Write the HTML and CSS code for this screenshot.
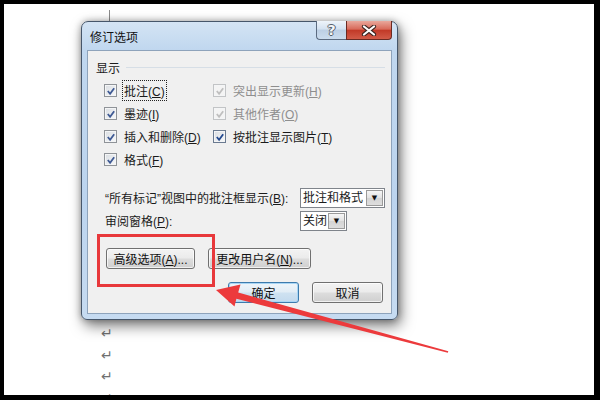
FILE: index.html
```html
<!DOCTYPE html>
<html lang="zh-CN">
<head>
  <meta charset="UTF-8">
  <title>修订选项</title>
  <link rel="stylesheet" href="styles.css">
</head>
<body>
  <div class="screen">
    <div class="doc">
      <span class="cursor"></span>
      <div class="marks">
        <span>↵</span>
        <span>↵</span>
        <span>↵</span>
        <span>↵</span>
      </div>
    </div>

    <div class="dialog">
      <div class="titlebar">
        <span class="title">修订选项</span>
        <div class="caption">
          <span class="cap-btn help">?</span>
          <span class="cap-btn close">
            <svg width="16" height="11" viewBox="0 0 16 11">
              <path d="M3 1.5 L13 9.5 M13 1.5 L3 9.5" stroke="#3a2420" stroke-width="4.2" stroke-linecap="round"/>
              <path d="M3 1.5 L13 9.5 M13 1.5 L3 9.5" stroke="#fff" stroke-width="2.2" stroke-linecap="round"/>
            </svg>
          </span>
        </div>
      </div>

      <div class="panel">
        <div class="group">显示</div>

        <div class="checks">
          <label class="check">
            <span class="box"><svg viewBox="0 0 11 11"><path d="M2 5.5 L4.5 8.5 L9 2.5"/></svg></span>
            <span class="focus">批注(<u>C</u>)</span>
          </label>
          <label class="check disabled">
            <span class="box"><svg viewBox="0 0 11 11"><path d="M2 5.5 L4.5 8.5 L9 2.5"/></svg></span>
            <span>突出显示更新(<u>H</u>)</span>
          </label>
          <label class="check">
            <span class="box"><svg viewBox="0 0 11 11"><path d="M2 5.5 L4.5 8.5 L9 2.5"/></svg></span>
            <span>墨迹(<u>I</u>)</span>
          </label>
          <label class="check disabled">
            <span class="box"><svg viewBox="0 0 11 11"><path d="M2 5.5 L4.5 8.5 L9 2.5"/></svg></span>
            <span>其他作者(<u>O</u>)</span>
          </label>
          <label class="check">
            <span class="box"><svg viewBox="0 0 11 11"><path d="M2 5.5 L4.5 8.5 L9 2.5"/></svg></span>
            <span>插入和删除(<u>D</u>)</span>
          </label>
          <label class="check">
            <span class="box strong"><svg viewBox="0 0 11 11"><path d="M2 5.5 L4.5 8.5 L9 2.5"/></svg></span>
            <span>按批注显示图片(<u>T</u>)</span>
          </label>
          <label class="check">
            <span class="box"><svg viewBox="0 0 11 11"><path d="M2 5.5 L4.5 8.5 L9 2.5"/></svg></span>
            <span>格式(<u>F</u>)</span>
          </label>
        </div>

        <div class="fields">
          <div class="field">
            <span class="field-label">“所有标记”视图中的批注框显示(<u>B</u>):</span>
            <span class="combo wide"><span class="combo-text">批注和格式</span><span class="combo-btn">▼</span></span>
          </div>
          <div class="field">
            <span class="field-label">审阅窗格(<u>P</u>):</span>
            <span class="combo narrow"><span class="combo-text">关闭</span><span class="combo-btn">▼</span></span>
          </div>
        </div>

        <div class="btn-row">
          <button class="btn advanced">高级选项(<u>A</u>)...</button>
          <button class="btn username">更改用户名(<u>N</u>)...</button>
        </div>
        <div class="btn-row end">
          <button class="btn ok">确定</button>
          <button class="btn cancel">取消</button>
        </div>
      </div>
    </div>

    <div class="callout"></div>
    <svg class="arrow" width="600" height="400" viewBox="0 0 600 400">
      <polygon points="216,290 240.5,284.5 238.2,292.6 448.3,351.2 447.8,352.8 236.4,298.8 234.5,306.5" fill="#ec3a3c"/>
    </svg>
  </div>
</body>
</html>
```

FILE: styles.css
```css
body {
  margin: 0;
  padding: 0;
  background-color: #fff;
  font-family: "Liberation Sans", "Noto Sans CJK SC", sans-serif;
  font-size: 12px;
  color: #1b1b1b;
}

.screen {
  position: relative;
  width: 600px;
  height: 400px;
  overflow: hidden;
  background-color: #fff;
}

/* black photo frame round the whole shot */
.screen::after {
  content: "";
  position: absolute;
  inset: 0;
  border-style: solid;
  border-color: #000;
  border-width: 4px 6px 5px 4px;
  pointer-events: none;
}

.doc {
  display: flex;
  flex-direction: column;
  padding-left: 101px;
}

.cursor {
  width: 1px;
  height: 11px;
  margin: 10px 0 0 8px;
  background-color: #8a8a8a;
}

.marks {
  display: flex;
  flex-direction: column;
  margin-top: 302px;
  font-family: "DejaVu Sans", sans-serif;
  font-size: 14px;
  line-height: 21.5px;
  color: #707070;
}

.dialog {
  position: absolute;
  left: 81px;
  top: 21px;
  width: 317px;
  height: 299px;
  box-sizing: border-box;
  display: flex;
  flex-direction: column;
  padding: 0 5px 5px;
  border: 1px solid #46566a;
  border-radius: 7px 7px 6px 6px;
  background: linear-gradient(#d4e4f4, #c0d7ef 28px, #bcd4ee 60%, #c6dbf1);
  box-shadow: 3px 6px 14px rgba(0, 0, 0, 0.5), 0 0 7px rgba(0, 0, 0, 0.3);
}

.titlebar {
  display: flex;
  justify-content: space-between;
  align-items: center;
  height: 28px;
}

.title {
  padding-left: 3px;
  margin-top: 1px;
  font-size: 12px;
  color: #111;
}

.caption {
  display: flex;
  align-self: flex-start;
  margin-top: -1px;
}

.cap-btn {
  display: flex;
  justify-content: center;
  align-items: center;
  height: 18px;
  box-sizing: content-box;
  border: 1px solid #5b6b80;
  border-top: none;
}

.help {
  width: 29px;
  border-right: none;
  border-radius: 0 0 0 4px;
  background: linear-gradient(#eef4fa, #d4e2f1 45%, #bccfe4 50%, #cbdcee);
  font-family: "DejaVu Sans", sans-serif;
  font-weight: bold;
  font-size: 14px;
  color: #f4f6f8;
  text-shadow: 1px 0 #55606c, -1px 0 #55606c, 0 1px #55606c, 0 -1px #55606c;
}

.close {
  width: 44px;
  border-color: #6a2a22;
  border-radius: 0 0 4px 0;
  background: linear-gradient(#e9a89c, #d86a5a 45%, #c23a28 52%, #d25b48);
}

.panel {
  flex: 1;
  border: 1px solid #8ea3bb;
  background-color: #f0f0f0;
}

.group {
  display: flex;
  align-items: center;
  gap: 6px;
  height: 16px;
  margin: 8px 6px 0 8px;
}

.group::after {
  content: "";
  flex: 1;
  margin-top: 1px;
  border-top: 1px solid #d6dee6;
}

.checks {
  display: grid;
  grid-template-columns: 109px auto;
  grid-auto-rows: 23px;
  margin-top: 4px;
  padding-left: 16px;
}

.check {
  display: flex;
  align-items: center;
  gap: 7px;
}

.check u,
.field-label u,
.btn u {
  text-underline-offset: 1px;
}

.box {
  display: flex;
  justify-content: center;
  align-items: center;
  width: 11px;
  height: 11px;
  border: 1px solid #8f9398;
  background: linear-gradient(135deg, #d9dde2, #f8f9fa);
  box-shadow: inset 0 0 0 1px #f4f5f6;
}

.box svg {
  width: 10px;
  height: 10px;
  fill: none;
  stroke: #3f5a94;
  stroke-width: 2;
}

.box.strong {
  border-color: #6a7a90;
}

.box.strong svg {
  stroke: #23498f;
}

.check.disabled {
  color: #8e8e8e;
}

.check.disabled .box {
  border-color: #c2c4c6;
  background: #f4f4f4;
}

.check.disabled .box svg {
  stroke: #bfbfbf;
}

.focus {
  margin-left: -2px;
  padding: 1px 1px;
  border: 1px dotted #222;
}

.fields {
  margin-top: 15px;
  padding-left: 17px;
}

.field {
  display: flex;
  align-items: center;
  height: 23px;
}

.field-label {
  width: 195px;
}

.combo {
  display: flex;
  align-items: stretch;
  height: 18px;
  border: 1px solid #7f848b;
  background-color: #fff;
}

.combo.wide {
  width: 83px;
}

.combo.narrow {
  width: 45px;
}

.combo-text {
  flex: 1;
  padding-left: 2px;
  line-height: 18px;
}

.combo-btn {
  display: flex;
  justify-content: center;
  align-items: center;
  width: 15px;
  margin: 1px;
  border: 1px solid #9a9a9a;
  background: linear-gradient(#f6f6f6, #e2e2e2 50%, #d4d4d4 51%, #dedede);
  font-family: "DejaVu Sans", sans-serif;
  font-size: 7px;
  color: #111;
}

.btn-row {
  display: flex;
  gap: 13px;
  margin-top: 16px;
  padding-left: 18px;
}

.btn-row.end {
  justify-content: flex-end;
  margin-top: 13px;
  padding: 0 8px 0 0;
}

.btn {
  height: 21px;
  padding: 0;
  border: 1px solid #707070;
  border-radius: 3px;
  background: linear-gradient(#f3f3f3, #ebebeb 48%, #dddddd 52%, #cfcfcf);
  box-shadow: inset 0 0 0 1px rgba(255, 255, 255, 0.7);
  font-family: "Liberation Sans", "Noto Sans CJK SC", sans-serif;
  font-size: 12px;
  color: #111;
}

.advanced {
  width: 89px;
}

.username {
  width: 103px;
}

.ok,
.cancel {
  width: 71px;
}

.ok {
  border-color: #3d7bad;
  background: linear-gradient(#eef5fa, #e2edf6 48%, #cfe2f1 52%, #c3daee);
  box-shadow: inset 0 0 0 1px #a9d6f5;
}

/* red annotation over the screenshot */
.callout {
  position: absolute;
  left: 97px;
  top: 234px;
  width: 112px;
  height: 47px;
  border: 3px solid #e8383b;
}

.arrow {
  position: absolute;
  left: 0;
  top: 0;
}
```
